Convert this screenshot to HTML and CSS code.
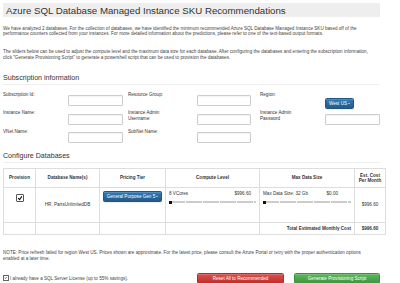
FILE: index.html
```html
<!DOCTYPE html>
<html lang="en">
<head>
    <meta charset="UTF-8">
    <title>Azure SQL Database Managed Instance SKU Recommendations</title>
    <link rel="stylesheet" href="styles.css">
</head>
<body>
    <div class="container">
        <div class="jumbo">
            <h1>Azure SQL Database Managed Instance SKU Recommendations</h1>
        </div>

        <p class="intro">We have analyzed 2 databases. For the collection of databases, we have identified the minimum recommended Azure SQL Database Managed Instance SKU based off of the performance counters collected from your instances. For more detailed information about the predictions, please refer to one of the text-based output formats.</p>
        <p class="intro second">The sliders below can be used to adjust the compute level and the maximum data size for each database. After configuring the databases and entering the subscription information, click "Generate Provisioning Script" to generate a powershell script that can be used to provision the databases.</p>

        <!-- Subscription -->
        <h2 class="heading">Subscription information</h2>
        <div class="form-rows">
            <div class="form-row">
                <div class="cell c1"><label>Subscription Id:</label></div>
                <div class="cell c2"><input type="text"></div>
                <div class="cell c3"><label>Resource Group:</label></div>
                <div class="cell c4"><input type="text"></div>
                <div class="cell c5"><label>Region:</label></div>
                <div class="cell c6"><button class="btn btn-blue btn-region">West US<span class="caret"></span></button></div>
            </div>
            <div class="form-row">
                <div class="cell c1"><label>Instance Name:</label></div>
                <div class="cell c2"><input type="text"></div>
                <div class="cell c3"><label>Instance Admin Username:</label></div>
                <div class="cell c4"><input type="text"></div>
                <div class="cell c5"><label>Instance Admin Password</label></div>
                <div class="cell c6"><input type="text"></div>
            </div>
            <div class="form-row">
                <div class="cell c1"><label>VNet Name:</label></div>
                <div class="cell c2"><input type="text"></div>
                <div class="cell c3"><label>SubNet Name:</label></div>
                <div class="cell c4"><input type="text"></div>
            </div>
        </div>

        <!-- Databases -->
        <h2 class="heading heading-db">Configure Databases</h2>
        <table class="db-table">
            <thead>
                <tr>
                    <th class="w1">Provision</th>
                    <th class="w2">Database Name(s)</th>
                    <th class="w3">Pricing Tier</th>
                    <th class="w4">Compute Level</th>
                    <th class="w5">Max Data Size</th>
                    <th class="w6">Est. Cost Per Month</th>
                </tr>
            </thead>
            <tbody>
                <tr class="data-row">
                    <td class="center"><span class="big-check"><svg viewBox="0 0 10 10"><path d="M2 5.2 L4.2 7.6 L8.2 2.2" fill="none" stroke="#111" stroke-width="1.9"/></svg></span></td>
                    <td class="center middle">HR, PartsUnlimitedDB</td>
                    <td class="center"><button class="btn btn-blue btn-tier">General Purpose Gen 5<span class="caret"></span></button></td>
                    <td>
                        <div class="slider-top compute"><span>8 VCores</span><span>$996.60</span></div>
                        <div class="slider"><span class="thumb"></span></div>
                    </td>
                    <td>
                        <div class="slider-top size"><span>Max Data Size: 32 Gb</span><span>$0.00</span></div>
                        <div class="slider"><span class="thumb"></span></div>
                    </td>
                    <td class="center middle">$996.60</td>
                </tr>
                <tr class="total-row">
                    <td></td>
                    <td></td>
                    <td></td>
                    <td></td>
                    <td class="right bold">Total Estimated Monthly Cost</td>
                    <td class="center bold">$996.60</td>
                </tr>
            </tbody>
        </table>

        <p class="note">NOTE: Price refresh failed for region West US. Prices shown are approximate. For the latest price, please consult the Azure Portal or retry with the proper authentication options enabled at a later time.</p>

        <div class="footer">
            <label class="license"><span class="small-check"><svg viewBox="0 0 10 10"><path d="M2 5.2 L4.2 7.6 L8.2 2.2" fill="none" stroke="#222" stroke-width="1.6"/></svg></span>I already have a SQL Server License (up to 55% savings).</label>
            <div class="actions">
                <button class="btn btn-red">Reset All to Recommended</button>
                <button class="btn btn-green">Generate Provisioning Script</button>
            </div>
        </div>
    </div>
</body>
</html>
```

FILE: styles.css
```css
body {
    font-family: "Liberation Sans", Arial, sans-serif;
    color: #333;
    background: #fff;
    margin: 0;
    padding: 3px 3px 0 3px;
}
.container {
    width: 377px;
}
.jumbo {
    background: #eee;
    height: 14px;
    padding: 0 3px;
    display: flex;
    align-items: center;
}
.jumbo h1 {
    margin: 0;
    font-size: 9.7px;
    font-weight: normal;
    color: #333;
    white-space: nowrap;
}
.intro, .note {
    font-size: 4.6px;
    line-height: 5.5px;
    margin: 8.75px 0 0 0;
    color: #444;
    max-width: 366px;
}
.intro.second {
    margin-top: 12.5px;
}
.heading {
    font-size: 7.1px;
    font-weight: normal;
    margin: 13.75px 0 0 0;
    padding-bottom: 2px;
    border-bottom: 1px solid #eee;
    line-height: 8px;
}
.heading-db {
    margin-top: 13px;
}
.form-rows {
    margin-top: 6px;
}
.form-row {
    display: flex;
    height: 11px;
    margin-bottom: 7.5px;
}
.cell label {
    display: block;
    font-size: 4.6px;
    line-height: 5.5px;
    padding-top: 0.5px;
    width: 38px;
}
.c1 { width: 65px; }
.c2 { width: 55px; }
.c3 { width: 69px; padding-left: 5px; }
.c4 { width: 54px; }
.c5 { width: 65px; padding-left: 9px; }
.c6 { width: 55px; }
.cell input {
    box-sizing: border-box;
    width: 100%;
    height: 11px;
    margin: 0;
    padding: 0;
    border: 1px solid #ccc;
    border-radius: 1px;
    box-shadow: inset 0 1px 1px rgba(0, 0, 0, 0.05);
}
.btn {
    font-family: inherit;
    font-size: 4.6px;
    color: #fff;
    border: 1px solid;
    border-radius: 1.5px;
    padding: 0;
    margin: 0;
    height: 11px;
    box-shadow: inset 0 1px 0 rgba(255, 255, 255, 0.15), 0 1px 1px rgba(0, 0, 0, 0.075);
}
.btn-blue {
    background: linear-gradient(#337ab7, #265a88);
    border-color: #245580;
}
.btn-red {
    background: linear-gradient(#d9534f, #c12e2a);
    border-color: #b92c28;
    width: 87px;
}
.btn-green {
    background: linear-gradient(#5cb85c, #419641);
    border-color: #3e8f3e;
    width: 86px;
}
.btn-region {
    width: 29px;
}
.btn-tier {
    width: 59px;
}
.caret {
    display: inline-block;
    width: 0;
    height: 0;
    margin-left: 1px;
    vertical-align: middle;
    border-top: 1.6px solid #fff;
    border-left: 1.4px solid transparent;
    border-right: 1.4px solid transparent;
}
.db-table {
    margin-top: 5px;
    width: 377px;
    border-collapse: collapse;
    table-layout: fixed;
    font-size: 4.6px;
}
.db-table th, .db-table td {
    border: 1px solid #ddd;
    padding: 3px;
    vertical-align: top;
}
.db-table th {
    height: 12px;
    font-weight: bold;
    color: #333;
    text-align: center;
    vertical-align: middle;
    line-height: 5.5px;
}
.w1 { width: 25px; }
.w2 { width: 57px; }
.w3 { width: 59px; }
.w4 { width: 87px; }
.w5 { width: 88px; }
.w6 { width: 24px; }
.data-row td {
    height: 25px;
    line-height: 5.5px;
}
.total-row td {
    height: 5px;
    padding: 3px;
    line-height: 5px;
    vertical-align: middle;
}
.center { text-align: center; }
.right { text-align: right; }
.bold { font-weight: bold; }
.db-table td.middle { vertical-align: middle; }
.data-row td.center:first-child { padding-top: 6px; }
.big-check {
    display: inline-block;
    width: 8px;
    height: 8px;
    box-sizing: border-box;
    border: 0.6px solid #555;
    border-radius: 1px;
    background: #fff;
}
.big-check svg, .small-check svg {
    display: block;
    width: 100%;
    height: 100%;
}
.slider-top {
    display: flex;
    justify-content: space-between;
}
.slider-top.compute { width: 82px; }
.slider-top.size { width: 75px; }
.slider {
    position: relative;
    margin-top: 4.5px;
    height: 2px;
    background: repeating-linear-gradient(90deg, #ccc 0, #ccc 16px, #fff 16px, #fff 17px);
}
.thumb {
    position: absolute;
    left: 0;
    top: -0.5px;
    width: 3px;
    height: 3px;
    background: #111;
}
.note {
    margin-top: 15px;
}
.footer {
    display: flex;
    align-items: center;
    justify-content: space-between;
    margin-top: 11.5px;
}
.license {
    display: flex;
    align-items: center;
    font-size: 4.6px;
    color: #444;
}
.small-check {
    display: inline-block;
    width: 3.5px;
    height: 3.5px;
    border: 0.5px solid #666;
    margin-right: 1.5px;
}
.actions {
    display: flex;
    gap: 10px;
}
```
